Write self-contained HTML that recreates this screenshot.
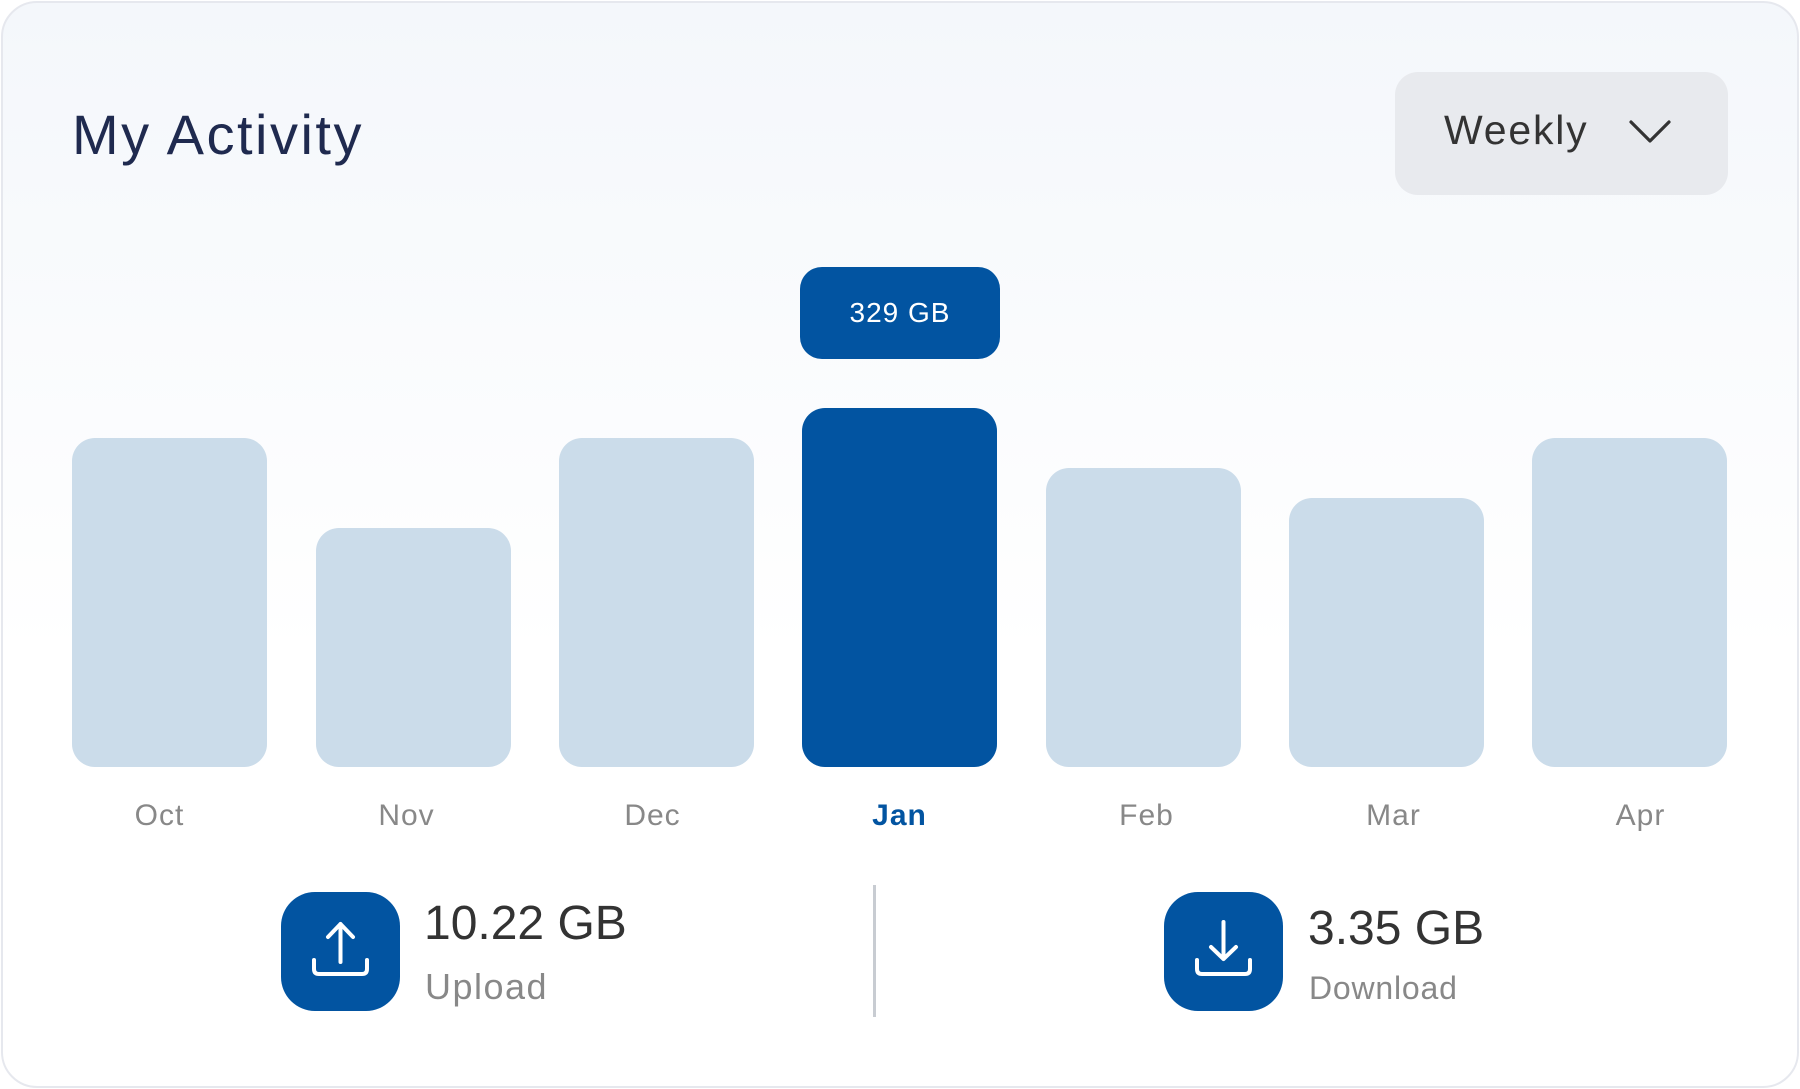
<!DOCTYPE html>
<html><head><style>
*{margin:0;padding:0;box-sizing:border-box}
body{width:1800px;height:1089px;background:#fff;font-family:"Liberation Sans",sans-serif;overflow:hidden}
.card{position:absolute;left:1px;top:1px;width:1798px;height:1087px;border:2px solid #e6e8ee;border-radius:36px;background:linear-gradient(#f4f7fb,#fff 60%)}
.a{position:absolute}
.bar{position:absolute;width:195px;background:#cbdcea;border-radius:23px;bottom:322px}
.lbl{position:absolute;width:195px;text-align:center;top:799px;font-size:30px;color:#888;letter-spacing:1px}
</style></head><body>
<div class="card"></div>
<div class="a" style="left:72px;top:102px;font-size:56px;color:#1f2a4f;letter-spacing:2.5px">My Activity</div>
<div class="a" style="left:1395px;top:72px;width:333px;height:123px;background:#e8eaee;border-radius:23px"></div>
<div class="a" style="left:1444px;top:107px;font-size:41px;color:#333;letter-spacing:1.8px">Weekly</div>
<svg class="a" style="left:1628px;top:118px" width="44" height="28" viewBox="0 0 44 28"><path d="M3 4 L22 23 L41 4" fill="none" stroke="#333" stroke-width="3.2" stroke-linecap="round" stroke-linejoin="round"/></svg>
<div class="a" style="left:800px;top:267px;width:200px;height:92px;background:#0254a1;border-radius:22px;color:#fff;font-size:28px;text-align:center;line-height:92px;letter-spacing:1px">329 GB</div>
<div class="bar" style="left:72px;top:438px"></div>
<div class="bar" style="left:316px;top:528px"></div>
<div class="bar" style="left:559px;top:438px"></div>
<div class="bar" style="left:802px;top:408px;background:#0254a1"></div>
<div class="bar" style="left:1046px;top:468px"></div>
<div class="bar" style="left:1289px;top:498px"></div>
<div class="bar" style="left:1532px;top:438px"></div>
<div class="lbl" style="left:62px">Oct</div>
<div class="lbl" style="left:309px">Nov</div>
<div class="lbl" style="left:555px">Dec</div>
<div class="lbl" style="left:802px;color:#0254a1;font-weight:bold">Jan</div>
<div class="lbl" style="left:1049px">Feb</div>
<div class="lbl" style="left:1296px">Mar</div>
<div class="lbl" style="left:1543px">Apr</div>
<div class="a" style="left:873px;top:885px;width:3px;height:132px;background:#c8ccd2"></div>
<div class="a" style="left:281px;top:892px;width:119px;height:119px;background:#0254a1;border-radius:34px"></div>
<svg class="a" style="left:281px;top:892px" width="119" height="119" viewBox="0 0 119 119"><g fill="none" stroke="#fff" stroke-width="4" stroke-linecap="round" stroke-linejoin="round"><path d="M59.5 32 V70 M47 45 L59.5 32 L72 45"/><path d="M33 68 V77 Q33 82 38 82 H81 Q86 82 86 77 V68"/></g></svg>
<div class="a" style="left:424px;top:896px;font-size:48px;color:#333">10.22 GB</div>
<div class="a" style="left:425px;top:966px;font-size:36px;color:#888;letter-spacing:1.5px">Upload</div>
<div class="a" style="left:1164px;top:892px;width:119px;height:119px;background:#0254a1;border-radius:34px"></div>
<svg class="a" style="left:1164px;top:892px" width="119" height="119" viewBox="0 0 119 119"><g fill="none" stroke="#fff" stroke-width="4" stroke-linecap="round" stroke-linejoin="round"><path d="M59.5 30 V67 M47 55 L59.5 67 L72 55"/><path d="M33 68 V77 Q33 82 38 82 H81 Q86 82 86 77 V68"/></g></svg>
<div class="a" style="left:1308px;top:901px;font-size:48px;color:#333">3.35 GB</div>
<div class="a" style="left:1309px;top:970px;font-size:32px;color:#888;letter-spacing:0.8px">Download</div>
</body></html>
